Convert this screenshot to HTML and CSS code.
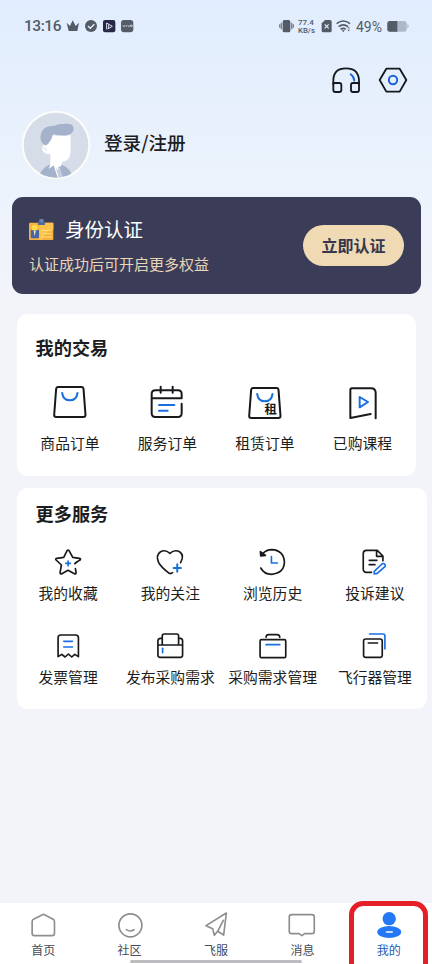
FILE: index.html
```html
<!DOCTYPE html>
<html lang="zh-CN">
<head>
<meta charset="utf-8">
<title>我的</title>
<link rel="stylesheet" href="styles.css">
</head>
<body>
<div class="app">
  <header class="status">
    <div class="status-left">
      <span class="clock">13:16</span>
      <svg class="crown" width="14" height="14" viewBox="198 56 42 42"><path fill="#525b66" d="M200 67l10 10 8-17 9 17 10-10-5 25h-26z"/></svg>
      <svg width="14" height="14" viewBox="251 56 42 42"><circle cx="272" cy="77" r="18" fill="#525b66"/><path d="M263 77l7 7 12-12" fill="none" stroke="#e6effb" stroke-width="4"/></svg>
      <svg width="14" height="14" viewBox="305 56 42 42"><rect x="308" y="59" width="37" height="37" rx="6" fill="#282747"/><path d="M319 87V68l17 10-14 8M325 73v10" fill="none" stroke="#dce4f4" stroke-width="3"/></svg>
      <svg width="14" height="14" viewBox="359 56 42 42"><rect x="362" y="59" width="37" height="37" rx="9" fill="#555c68"/><path d="M367 74l4 6 4-6M378 74v6M382 74l4 6 4-6M391 74h5v5h-5z" fill="none" stroke="#d6dee9" stroke-width="2"/></svg>
    </div>
    <div class="status-right">
      <svg width="15" height="14" viewBox="188 56 45 42"><rect x="199" y="59" width="23" height="37" rx="5" fill="#525b66"/><path d="M195 67v20M190 72v10M226 67v20M231 72v10" stroke="#7b8491" stroke-width="4"/></svg>
      <span class="speed"><b>77.4</b><b>KB/s</b></span>
      <svg class="sim" width="11" height="14" viewBox="316 56 33 42"><path d="M328 59h15q5 0 5 5v27q0 5-5 5h-20q-5 0-5-5V69z" fill="#525b66"/><path d="M327 72l12 12M339 72l-12 12" stroke="#e4eefb" stroke-width="3.5"/></svg>
      <svg class="wifi" width="15" height="14" viewBox="361 56 45 42"><path d="M363 70q20-16 40 0M369 79q14-11 28 0M375 87q8-6 15 0" fill="none" stroke="#525b66" stroke-width="5"/><path d="M378 90h9l-4 6zM395 84l4-5 4 5zM395 88l4 5 4-5z" fill="#525b66"/></svg>
      <span class="percent">49%</span>
      <svg class="battery" width="22" height="12" viewBox="511 60 66 36"><rect x="512" y="63" width="58" height="32" rx="8" fill="#adb9cb"/><path d="M520 63h22v32h-22q-8 0-8-8V71q0-8 8-8z" fill="#525b66"/><path d="M572 72q4 1 4 7t-4 7z" fill="#adb9cb"/></svg>
    </div>
  </header>

  <div class="actions">
    <svg width="32" height="32" viewBox="343 193 96 96" fill="none" stroke="#15181d" stroke-width="5.5" stroke-linejoin="round" stroke-linecap="round"><path d="M353 254v-11q0-37 38-37t39 37v11"/><path d="M353 250h18q6 0 6 6v15q0 6-6 6h-12q-6 0-6-6zM430 250h-18q-6 0-6 6v15q0 6 6 6h12q6 0 6-6z"/><path d="M405 224q10 7 11 19" stroke="#1862d5"/></svg>
    <svg width="32" height="32" viewBox="484 193 96 96" fill="none" stroke="#15181d" stroke-width="5.5" stroke-linejoin="round"><path d="M512 207h40l20 34-20 35h-40l-20-35z"/><circle cx="532" cy="241" r="12.5" stroke="#1862d5" stroke-width="6"/></svg>
  </div>

  <section class="profile">
    <svg class="avatar" width="70" height="70" viewBox="61 31 210 210">
      <defs><clipPath id="face"><circle cx="166" cy="136" r="98"/></clipPath></defs>
      <circle cx="166" cy="136" r="103" fill="#fcfdf8"/><circle cx="166" cy="136" r="97" fill="#d7dce9"/>
      <g clip-path="url(#face)">
        <path d="M111 240q7-32 38-47l36 3q26 10 34 44z" fill="#a5b2cb"/>
        <path d="M149 164v25l-4 18 14-10 12 38 15-4-14-28 9-3 5-20-8-8z" fill="#fff"/>
        <path d="M164 201l6 11 8-9 7 30-9 7z" fill="#c5cede"/>
        <path d="M142 135q10-11 14-28 25 4 54-1v42q0 38-27 38-24 0-34-23-16 2-23-10-5-16 7-19 6-2 9 1z" fill="#fff"/>
        <path d="M134 137q-18-9-14-32 6-28 41-27 12-7 42-6 17 2 16 17-3 20-33 18-17 0-29-3-4 17-16 29-4 5-7 4z" fill="#a5b2cb"/>
        <path d="M128 144q7-1 9 9" stroke="#b9c4d6" stroke-width="2" fill="none"/>
      </g>
    </svg>
    <span class="login">登录/注册</span>
  </section>

  <section class="banner">
    <div>
      <div class="banner-title">
        <svg width="26" height="23" viewBox="84 84 78 69"><rect x="87" y="98" width="73" height="52" rx="3" fill="#f7b13c"/><path d="M118 98h42v20q-22 4-34 32h-8z" fill="#fbc34b"/><rect x="114" y="95" width="21" height="10" rx="2" fill="#52699c"/><rect x="118" y="87" width="13" height="10" rx="3" fill="#6c83b4"/><rect x="92" y="119" width="25" height="26" rx="3" fill="#4b66a2"/><circle cx="104" cy="113" r="9" fill="#ffdc48"/><path d="M101 123h6l-3 16z" fill="#f5e8bb"/><path d="M123 121h32M123 131h32M123 141h32" stroke="#ffe17a" stroke-width="3"/></svg>
        <span>身份认证</span>
      </div>
      <div class="banner-sub">认证成功后可开启更多权益</div>
    </div>
    <button class="verify">立即认证</button>
  </section>

  <section class="card trade">
    <h2>我的交易</h2>
    <div class="grid">
      <div class="item"><svg viewBox="121.5 216 120 120"><path d="M145 231h71q5 0 6 5l6 79q0 6-6 6h-82q-6 0-6-6l6-79q1-5 6-5z"/><path class="blue" d="M158 249q3 22 23 22t23-22"/></svg><span>商品订单</span></div>
      <div class="item"><svg viewBox="414 216 120 120"><path d="M518 264v-12q0-11-11-11h-68q-11 0-11 11v58q0 11 11 11h68q11 0 11-11v-29M428 265h90M455 230v18M491 230v18"/><path class="blue" d="M450 285h46M450 302h26"/></svg><span>服务订单</span></div>
      <div class="item"><svg viewBox="88.5 216 120 120"><path d="M112 234h71q5 0 6 5l6 79q0 6-6 6h-82q-6 0-6-6l6-79q1-5 6-5z"/><path class="blue" d="M125 252q3 22 23 22t23-22"/><text x="147" y="312">租</text></svg><span>租赁订单</span></div>
      <div class="item"><svg viewBox="381 216 120 120"><path d="M482 325v-76q0-14-14-14h-57q-5 0-5 5v84l61-12"/><path class="blue" d="M434 261v31l25-16z"/></svg><span>已购课程</span></div>
    </div>
  </section>

  <section class="card services">
    <h2>更多服务</h2>
    <div class="grid">
      <div class="item"><svg viewBox="126.75 183 96 96"><path d="M195 236q2-3 17-12 1-3-3-4l-20-3-11-20q-3-3-6 0l-10 20-21 3q-5 2-2 5l16 15-4 23q0 5 5 3l19-10 19 10q5 2 5-3l-2-12"/><path class="blue" d="M175 228v14M168 235h14"/></svg><span>我的收藏</span></div>
      <div class="item"><svg viewBox="434.25 183 96 96"><path d="M514 233q12-21-2-32-15-9-30 4-15-13-29-4-14 10-5 31 6 13 32 33 5 2 10-2"/><path class="blue bold" d="M504 238v22M493 249h22"/></svg><span>我的关注</span></div>
      <div class="item"><svg viewBox="123.75 183 96 96"><path d="M135 249q10 19 33 19 37-4 38-37-2-35-38-37-16 0-27 12"/><path d="M134 200l1 13 14-2z" fill="#17191c"/><path class="blue" d="M167 215v19h18"/></svg><span>浏览历史</span></div>
      <div class="item"><svg viewBox="431.25 183 96 96"><path d="M469 262h-15q-10 0-10-10v-46q0-10 10-10h32l17 17v14M484 197v17h18M462 226h23M462 239h17"/><path class="blue" d="M477 259l23-22q4-3 8 0 4 4 1 8l-23 20-9 2z"/></svg><span>投诉建议</span></div>
      <div class="item"><svg viewBox="126.75 435 96 96"><path d="M145 515v-57q0-8 8-8h45q8 0 8 8v57l-11-7-9 8-10-9-10 9-10-8z"/><path class="blue" d="M162 469h26M162 486h26"/></svg><span>发票管理</span></div>
      <div class="item"><svg viewBox="434.25 435 96 96"><path d="M446 480h74v30q0 7-7 7h-60q-7 0-7-7v-42q0-8 8-8h5v19M459 460v-7q0-6 6-6h37q6 0 6 6v7h5q7 0 7 8v12M508 460v19"/><path class="blue" d="M460 490v13"/></svg><span>发布采购需求</span></div>
      <div class="item"><svg viewBox="123.75 435 96 96"><path d="M137 464h69q4 0 4 4v46q0 4-4 4h-69q-4 0-4-4v-46q0-4 4-4zM151 457q0-8 7-8h26q8 0 8 8"/><path class="blue" d="M151 479h41"/></svg><span>采购需求管理</span></div>
      <div class="item"><svg viewBox="431.25 435 96 96"><path d="M451 462h44q6 0 6 6v43q0 6-6 6h-44q-6 0-6-6v-43q0-6 6-6zM459 474h28"/><path class="blue" d="M463 447h41q5 0 5 5v40"/></svg><span>飞行器管理</span></div>
    </div>
  </section>

  <nav class="tabs">
    <div class="tab"><svg viewBox="81.6 60 96 96"><path d="M131 73l29 15q4 2 4 7v35q0 7-7 7h-53q-7 0-7-7V95q0-5 4-7z"/></svg><span>首页</span></div>
    <div class="tab"><svg viewBox="340.8 60 96 96"><circle cx="390" cy="106" r="34.5"/><path d="M378 119q12 8 23 0"/></svg><span>社区</span></div>
    <div class="tab"><svg viewBox="600 60 96 96"><path d="M679 69l-61 38 20 9 5 20 10-12 18 11zM670 91l-17 33"/></svg><span>飞服</span></div>
    <div class="tab"><svg viewBox="211.2 60 96 96"><path d="M228 74h61q7 0 7 7v43q0 7-7 7h-22l-8 6-9-6h-22q-7 0-7-7V81q0-7 7-7z"/></svg><span>消息</span></div>
    <div class="tab active"><svg viewBox="470.4 60 96 96"><circle cx="519" cy="86" r="20"/><ellipse cx="519" cy="126" rx="36" ry="18"/><path d="M511 126h17" stroke="#fff" stroke-width="5"/></svg><span>我的</span></div>
    <i class="home-bar"></i>
    <i class="highlight"></i>
  </nav>
</div>
</body>
</html>
```
FILE: styles.css
```css
* { box-sizing: border-box; }
body {
  margin: 0;
  font-family: "Noto Sans CJK SC", sans-serif;
  color: #1b1d21;
}
svg { display: block; flex: none; }
.app {
  height: 964px;
  overflow: hidden;
  display: flex;
  flex-direction: column;
  background: linear-gradient(#e0edfe 0, #e7f0fc 110px, #edf3fc 200px, #f3f4f9 320px);
}
.status {
  height: 52px;
  padding: 0 24px;
  display: flex;
  justify-content: space-between;
  align-items: center;
  color: #525b66;
}
.status-left, .status-right { display: flex; align-items: center; }
.status-left { gap: 4px; }
.clock {
  width: 38px;
  font: 500 15.5px/20px Roboto, sans-serif;
  letter-spacing: -0.45px;
}
.speed {
  display: flex;
  flex-direction: column;
  width: 19px;
  margin: 0 4px 0 4px;
  font: 8px/9px Roboto, sans-serif;
}
.speed b + b { margin-top: -1px; font-size: 7.8px; }
.speed b { font-weight: 500; height: 9px; }
.wifi { margin-left: 4px; }
.percent {
  width: 27px;
  margin: 1px 4px 0 5px;
  font: 14px/16px Roboto, sans-serif;
}
.battery { margin-right: -1px; }
.actions {
  height: 56px;
  padding: 12px 22.7px 0;
  display: flex;
  justify-content: flex-end;
  gap: 15px;
}
.profile {
  height: 89px;
  padding: 2px 0 0 20.5px;
  display: flex;
  align-items: flex-start;
}
.login {
  margin: 19px 0 0 13.5px;
  font-size: 18.6px;
  line-height: 26px;
  font-weight: 500;
}
.banner {
  height: 97px;
  margin: 0 11px 0 12px;
  padding: 18px 17px 0;
  display: flex;
  justify-content: space-between;
  border-radius: 11px;
  background: #3b3d58;
}
.banner-title {
  display: flex;
  align-items: center;
  gap: 11px;
  height: 28px;
  margin-left: -1px;
  color: #fff;
  font-size: 19.5px;
  line-height: 28px;
}
.banner-sub {
  margin-top: 10px;
  color: #e9d5b8;
  font-size: 15px;
  line-height: 22px;
}
.verify {
  width: 101px;
  height: 41px;
  margin-top: 10px;
  padding: 0 0 2px;
  border: 0;
  border-radius: 21px;
  background: #f0dab3;
  color: #36364e;
  font: 700 16px/24px "Noto Sans CJK SC", sans-serif;
}
.card { border-radius: 11px; background: #fff; }
.card h2 {
  margin: 0;
  padding-left: 18.5px;
  font-size: 18.2px;
  line-height: 26px;
  font-weight: 700;
}
.grid { display: grid; grid-template-columns: repeat(4, 1fr); }
.item {
  display: flex;
  flex-direction: column;
  align-items: center;
  font-size: 14.8px;
  line-height: 22px;
  white-space: nowrap;
}
.item svg {
  fill: none;
  stroke: #17191c;
  stroke-linecap: round;
  stroke-linejoin: round;
}
.item svg .blue { stroke: #1a6fdf; }
.item svg .bold { stroke-width: 6; }
.item text {
  fill: #17191c;
  stroke: none;
  font-size: 37px;
  font-weight: 700;
}
.trade {
  height: 162px;
  margin: 20px 16px 0 17px;
  padding-top: 20px;
}
.trade .grid { padding: 22px 4.8px 0 4.2px; }
.trade .item { gap: 10px; }
.trade svg { width: 40px; height: 40px; stroke-width: 6; }
.services {
  height: 221px;
  margin: 12px 5px 0 17px;
  padding-top: 12px;
}
.services .grid { padding: 20px 1px 0 0; row-gap: 25px; }
.services .item { gap: 4px; height: 59px; }
.services svg { width: 32px; height: 32px; stroke-width: 5; }
.tabs {
  position: relative;
  height: 61px;
  margin-top: auto;
  display: grid;
  grid-template-columns: repeat(5, 1fr);
  padding-top: 7px;
  background: #fff;
}
.tab {
  display: flex;
  flex-direction: column;
  align-items: center;
  font-size: 12px;
  line-height: 16px;
  color: #454b57;
}
.tab svg {
  width: 32px;
  height: 32px;
  fill: none;
  stroke: #8d8e91;
  stroke-width: 5;
  stroke-linecap: round;
  stroke-linejoin: round;
}
.tab.active { color: #1959b8; }
.tab.active svg { fill: #2478f5; stroke: none; }
.home-bar {
  position: absolute;
  left: 130px;
  bottom: 1px;
  width: 172px;
  height: 3px;
  border-radius: 2px;
  background: #bdbdc1;
}
.highlight {
  position: absolute;
  left: 349px;
  top: -2px;
  width: 79px;
  height: 80px;
  border: 5px solid #e61e27;
  border-radius: 14px;
}
```
